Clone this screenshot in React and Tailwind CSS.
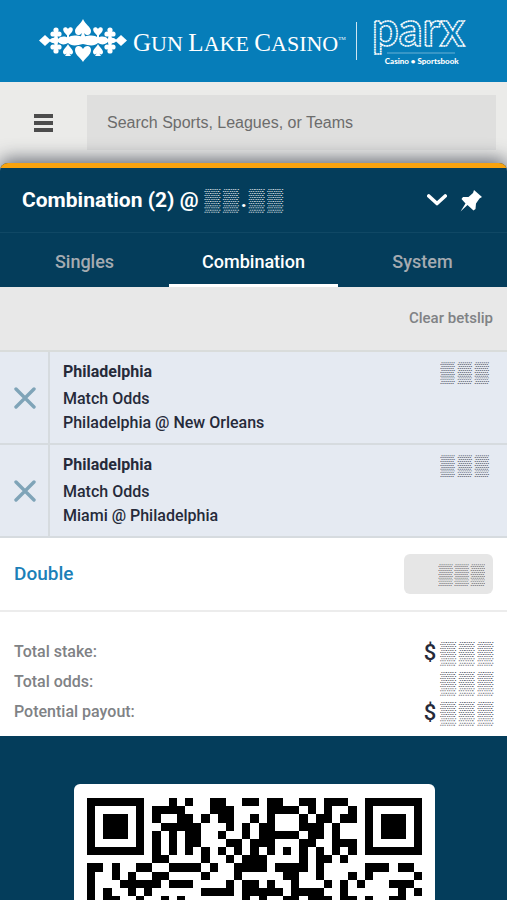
import React, { useState } from "react";

// one string per module row, # is a dark module
const QR_ROWS = [
  "#######   # #  ##  ## ##  ## ###  #######",
  "#     # ####   ###    #### # #  # #     #",
  "# ### # #  ## # ##  # #   # ## ## # ### #",
  "# ### #  #####   # # ##   ### #   # ### #",
  "# ### # # # ##  #  # ##### ## #   # ### #",
  "#     # # # ##   ## ###   ##  ### #     #",
  "####### # # # # # # # # # # # # # #######",
  "        ##    #  # ###    # ## #         ",
  "## #  ##  #### #  #### #### #     ### ## ",
  "#  # #  ##    #   #     ##  #   # #     #",
  "#   ##### ###    # ## #  #   # # #   ### ",
  "# #  # #      #### ##### ####  #      # #",
  "# ##  #  # #       # #  ## ### ## #  ##  ",
];

const BETS = [
  { id: 1, pick: "Philadelphia", market: "Match Odds", game: "Philadelphia @ New Orleans" },
  { id: 2, pick: "Philadelphia", market: "Match Odds", game: "Miami @ Philadelphia" },
];

const TOTALS = [
  { label: "Total stake:", currency: "$" },
  { label: "Total odds:", currency: "" },
  { label: "Potential payout:", currency: "$" },
];

const TABS = ["Singles", "Combination", "System"];

// digits that are masked out
const Masked = ({ count, className = "" }) => (
  <span className={`inline-flex gap-[3px] font-normal ${className}`}>
    {Array.from({ length: count }, (_, i) => (
      <span key={i}>▒</span>
    ))}
  </span>
);

const Emblem = () => (
  <svg viewBox="0 0 88 44" className="h-11 w-[88px] shrink-0" fill="white" aria-hidden="true">
    <defs>
      <path id="heart" d="M0 8C-2 4-8 1-8-4C-8-9-2-9 0-5C2-9 8-9 8-4C8 1 2 4 0 8Z" />
      <g id="club">
        <circle cx="0" cy="-3" r="2.6" />
        <circle cx="-3" cy="1" r="2.6" />
        <circle cx="3" cy="1" r="2.6" />
        <path d="M-1.500-3H1.500V2L2 6H-2L-1.500 2Z" />
      </g>
      <g id="half">
        <use href="#heart" transform="translate(29 13) scale(.6)" />
        <use href="#club" transform="translate(17 14)" />
        <path d="M10 22C12 18 16 18 19 20C22 17 26 17 29 19C32 16 37 16 44 18V22Z" />
        <path d="M28 15H30V20H28Z" />
        <path d="M0 21.500L6 16L12 21.500L6 27Z" />
      </g>
      <g id="lower">
        <path d="M29 25C30 28 34 30 34 33C34 36 31 36 30 34L32 37H26L28 34C27 36 24 36 24 33C24 30 28 28 29 25Z" />
        <use href="#club" transform="translate(17 29) scale(1 -1)" />
        <path d="M10 21C12 25 16 25 19 23C22 26 26 26 29 24C32 27 37 27 44 25V21Z" />
      </g>
    </defs>
    <use href="#half" />
    <use href="#half" transform="translate(88) scale(-1 1)" />
    <use href="#lower" />
    <use href="#lower" transform="translate(88) scale(-1 1)" />
    <path d="M44 0C46 5 52 8 52 12C52 17 47 17 45 14L47 20H41L43 14C41 17 36 17 36 12C36 8 42 5 44 0Z" />
    <use href="#heart" transform="translate(44 35)" />
  </svg>
);

const Header = () => (
  <header className="flex h-[82px] shrink-0 items-center bg-[#067db9] pl-[39px] text-white">
    <Emblem />
    <div className="ml-1.5 flex items-start whitespace-nowrap pt-1 font-['Liberation_Serif',serif] text-[22px] leading-7">
      <span>
        <span className="text-[25px]">G</span>UN <span className="text-[25px]">L</span>AKE{" "}
        <span className="text-[25px]">C</span>ASINO
      </span>
      <span className="text-[5px] leading-5">TM</span>
    </div>
    <div className="ml-2.5 h-[38px] w-px shrink-0 bg-white/80" />
    <div className="ml-3.5 w-[102px] shrink-0">
      <svg viewBox="0 0 102 40" className="block h-10 w-[102px] overflow-visible">
        <text
          x="1"
          y="30"
          className="font-['Lato',sans-serif] text-[47px] font-bold"
          fill="none"
          stroke="white"
          strokeWidth="1.6"
          strokeDasharray="2 0.5"
        >
          parx
        </text>
        <path d="M16 37H84" stroke="white" strokeOpacity=".4" strokeWidth="1" />
      </svg>
      <p className="text-center font-['Lato',sans-serif] text-[8px] font-black leading-[10px]">Casino • Sportsbook</p>
    </div>
  </header>
);

const SearchBar = () => (
  <div className="flex h-[81px] shrink-0 bg-[#ebebe9] pr-[11px]">
    <button type="button" aria-label="Menu" className="flex w-[87px] flex-col items-center justify-center gap-[3px]">
      <span className="h-1 w-[19px] bg-[#4c4c4c]" />
      <span className="h-1 w-[19px] bg-[#4c4c4c]" />
      <span className="h-1 w-[19px] bg-[#4c4c4c]" />
    </button>
    <input
      type="search"
      aria-label="Search"
      placeholder="Search Sports, Leagues, or Teams"
      className="mt-[13px] h-[55px] min-w-0 flex-1 bg-[#dfdfde] px-5 font-['Liberation_Sans',sans-serif] text-base text-[#6c6c6c] placeholder:text-[#6c6c6c]"
    />
  </div>
);

const BetRow = ({ bet }) => (
  <li className="flex border-b-2 border-[#d6dbdf] bg-[#e5eaf2]">
    <button
      type="button"
      aria-label={`Remove ${bet.game}`}
      className="flex w-[50px] shrink-0 items-center justify-center border-r-2 border-[#d6dbdf] pl-0.5"
    >
      <svg viewBox="0 0 22 22" className="size-[22px]" stroke="#7fa4b8" strokeWidth="3.4" strokeLinecap="round">
        <path d="M2 2L20 20M20 2L2 20" />
      </svg>
    </button>
    <div className="flex-1 py-2 pl-[13px] text-base leading-6 font-medium text-[#262a3a]">
      <p className="mb-[3px] font-bold">{bet.pick}</p>
      <p>{bet.market}</p>
      <p>{bet.game}</p>
    </div>
    <p className="pt-1.5 pr-[18px] text-[20px] leading-7 text-[#262a3a]/75">
      <Masked count={3} />
    </p>
  </li>
);

const QrCode = () => (
  <svg viewBox="0 0 41 13" className="block w-full" shapeRendering="crispEdges" role="img" aria-label="QR code">
    {QR_ROWS.map((row, y) =>
      row.split("").map((cell, x) => (cell === "#" ? <rect key={`${x}-${y}`} x={x} y={y} width="1" height="1" /> : null))
    )}
  </svg>
);

const App = () => {
  const [tab, setTab] = useState("Combination");

  return (
    <div className="flex h-screen flex-col overflow-hidden bg-[#ebebe9] font-['Roboto',sans-serif]">
      <Header />
      <SearchBar />
      <main className="flex min-h-0 flex-1 flex-col overflow-hidden rounded-t-lg bg-[#043d5b] shadow-[0_-4px_18px_0_rgba(50,55,70,0.7)]">
        <div className="h-[5px] shrink-0 bg-[#f9a30e]" />
        <div className="flex h-[65px] shrink-0 items-center border-b border-[#104865] pr-6 pl-[22px] text-white">
          <h1 className="flex flex-1 items-center text-[21px] leading-7 font-bold">
            Combination (2) @
            <Masked count={2} className="ml-1.5 text-[22px] text-white/80" />
            <span className="mx-0.5">.</span>
            <Masked count={2} className="text-[22px] text-white/80" />
          </h1>
          <button type="button" aria-label="Collapse">
            <svg viewBox="0 0 20 12" className="h-3 w-5" fill="none" stroke="white" strokeWidth="3.6">
              <path d="M1.8 2L10 9.5L18.200 2" strokeLinejoin="round" strokeLinecap="round" />
            </svg>
          </button>
          <button type="button" aria-label="Pin" className="ml-3">
            <svg viewBox="0 0 24 24" className="size-6" fill="white">
              <path d="M15 2L23 9L20.500 10.500L17 15.500L16.500 21L14.500 22.500L8.500 17L1.500 23.500L6.500 15.500L2.500 11L4 9L9.500 9L14 5Z" />
            </svg>
          </button>
        </div>

        <div role="tablist" className="grid h-[54px] shrink-0 grid-cols-3">
          {TABS.map((name) => (
            <button
              key={name}
              type="button"
              role="tab"
              aria-selected={tab === name}
              onClick={() => setTab(name)}
              className={`border-b-[3px] pt-1.5 text-lg font-medium ${
                tab === name ? "border-white text-white" : "border-transparent text-[#a5abb1]"
              }`}
            >
              {name}
            </button>
          ))}
        </div>

        <div className="flex h-[65px] shrink-0 items-center justify-end border-b-2 border-[#d9dcdb] bg-[#e8e8e8] px-3.5">
          <button type="button" className="text-[15px] font-medium text-[#808285]">
            Clear betslip
          </button>
        </div>

        <ul className="shrink-0">
          {BETS.map((bet) => (
            <BetRow key={bet.id} bet={bet} />
          ))}
        </ul>

        <div className="flex h-[74px] shrink-0 items-center justify-between border-b-2 border-[#ececec] bg-white px-3.5">
          <label htmlFor="stake" className="text-[19px] font-medium text-[#1b80b8]">
            Double
          </label>
          <input
            id="stake"
            defaultValue={"▒\u200a▒\u200a▒"}
            className="h-10 w-[89px] rounded-md bg-[#e6e6e6] pr-2 text-right text-[20px] text-[#55565a]/80"
          />
        </div>

        <dl className="shrink-0 bg-white px-3.5 pt-[25px] pb-[9px]">
          {TOTALS.map((total) => (
            <div key={total.label} className="flex h-[30px] items-center justify-between">
              <dt className="text-base font-medium text-[#808285]">{total.label}</dt>
              <dd className="flex items-center gap-1 text-[22px] font-medium text-[#262a3a]">
                <span>{total.currency}</span>
                <Masked count={3} className="text-[22px] text-[#262a3a]/75" />
              </dd>
            </div>
          ))}
        </dl>

        <section className="min-h-0 flex-1 overflow-hidden pt-12 pr-[14.2%] pl-[14.6%]">
          <div className="rounded-t-md bg-white px-[3.6%] pt-3.5">
            <QrCode />
          </div>
        </section>
      </main>
    </div>
  );
};

export default App;
